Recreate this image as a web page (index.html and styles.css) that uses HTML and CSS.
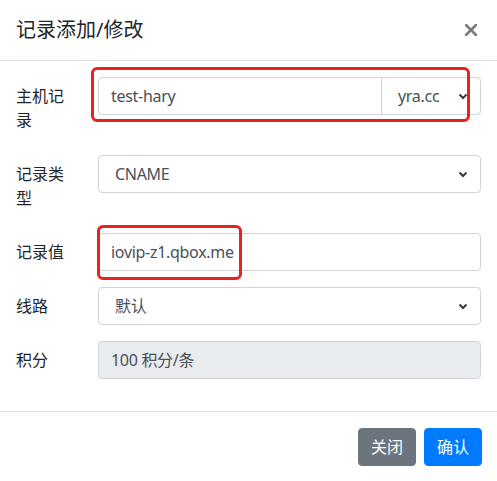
FILE: index.html
```html
<!DOCTYPE html>
<html lang="zh-CN">
<head>
    <meta charset="UTF-8">
    <meta name="viewport" content="width=device-width, initial-scale=1.0">
    <title>记录添加/修改</title>
    <link rel="stylesheet" href="styles.css">
</head>
<body>
    <div class="modal">
        <div class="modal-header">
            <h5 class="modal-title">记录添加/修改</h5>
            <button class="close" type="button" aria-label="Close">
                <svg width="12" height="12" viewBox="0 0 12 12">
                    <path d="M1 1L11 11M11 1L1 11" stroke="currentColor" stroke-width="2.6" stroke-linecap="round"/>
                </svg>
            </button>
        </div>

        <div class="modal-body">
            <div class="form-group">
                <label class="form-label">主机记录</label>
                <div class="form-control-wrap input-group">
                    <div class="form-control">test-hary</div>
                    <div class="form-select domain">
                        <span>yra.cc</span>
                        <svg class="chevron" width="10" height="7" viewBox="0 0 10 7">
                            <path d="M1.5 1.5L5 5L8.5 1.5" fill="none" stroke="#343a40" stroke-width="2"/>
                        </svg>
                    </div>
                </div>
            </div>

            <div class="form-group">
                <label class="form-label">记录类型</label>
                <div class="form-control-wrap">
                    <div class="form-select">
                        <span>CNAME</span>
                        <svg class="chevron" width="10" height="7" viewBox="0 0 10 7">
                            <path d="M1.5 1.5L5 5L8.5 1.5" fill="none" stroke="#343a40" stroke-width="2"/>
                        </svg>
                    </div>
                </div>
            </div>

            <div class="form-group">
                <label class="form-label">记录值</label>
                <div class="form-control-wrap">
                    <div class="form-control">iovip-z1.qbox.me</div>
                </div>
            </div>

            <div class="form-group">
                <label class="form-label">线路</label>
                <div class="form-control-wrap">
                    <div class="form-select">
                        <span>默认</span>
                        <svg class="chevron" width="10" height="7" viewBox="0 0 10 7">
                            <path d="M1.5 1.5L5 5L8.5 1.5" fill="none" stroke="#343a40" stroke-width="2"/>
                        </svg>
                    </div>
                </div>
            </div>

            <div class="form-group">
                <label class="form-label">积分</label>
                <div class="form-control-wrap">
                    <div class="form-control readonly">100 积分/条</div>
                </div>
            </div>
        </div>

        <div class="modal-footer">
            <button class="btn btn-secondary" type="button">关闭</button>
            <button class="btn btn-primary" type="button">确认</button>
        </div>

        <!-- annotation boxes drawn over the screenshot -->
        <div class="mark mark-host"></div>
        <div class="mark mark-value"></div>
    </div>
</body>
</html>
```

FILE: styles.css
```css
* {
    margin: 0;
    padding: 0;
    box-sizing: border-box;
}

body {
    font-family: "Noto Sans", "Noto Sans CJK SC", sans-serif;
    font-size: 16px;
    line-height: 1.5;
    color: #212529;
    background: #fff;
}

.modal {
    position: relative;
    width: 497px;
    background: #fff;
}

.modal-header {
    display: flex;
    align-items: center;
    justify-content: space-between;
    height: 61px;
    padding: 0 16px 1px 16px;
    border-bottom: 1px solid #dee2e6;
}

.modal-title {
    font-size: 20px;
    font-weight: 400;
    line-height: 30px;
    color: #212529;
}

.close {
    display: flex;
    align-items: center;
    justify-content: center;
    width: 16px;
    height: 16px;
    margin-right: 2px;
    border: none;
    background: none;
    color: #7b7b7b;
    cursor: pointer;
}

.modal-body {
    padding: 16px;
}

.form-group {
    display: flex;
    align-items: flex-start;
    margin-bottom: 16px;
}

.form-label {
    flex: 0 0 82px;
    padding: 7px 30px 7px 0;
    line-height: 24px;
}

.form-control-wrap {
    flex: 1;
    min-width: 0;
}

.form-control,
.form-select {
    height: 38px;
    border: 1px solid #ced4da;
    border-radius: 4px;
    color: #495057;
    line-height: 24px;
    letter-spacing: -0.3px;
    white-space: nowrap;
}

.form-control {
    padding: 6px 12px;
}

.form-control.readonly {
    background: #e9ecef;
}

.form-select {
    display: flex;
    align-items: center;
    justify-content: space-between;
    padding: 6px 12px 6px 16px;
}

.chevron {
    flex-shrink: 0;
}

.input-group {
    display: flex;
}

.input-group .form-control {
    flex: 1;
    border-top-right-radius: 0;
    border-bottom-right-radius: 0;
}

.input-group .domain {
    width: 100px;
    margin-left: -1px;
    border-top-left-radius: 0;
    border-bottom-left-radius: 0;
}

.modal-footer {
    display: flex;
    justify-content: flex-end;
    gap: 8px;
    padding: 16px 15px 16px 16px;
    border-top: 1px solid #dee2e6;
}

.btn {
    height: 38px;
    padding: 0 12px;
    border: 1px solid transparent;
    border-radius: 4px;
    font-family: inherit;
    font-size: 16px;
    line-height: 24px;
    color: #fff;
    cursor: pointer;
}

.btn-secondary {
    background: #6c757d;
    border-color: #6c757d;
}

.btn-primary {
    background: #007bff;
    border-color: #007bff;
}

.mark {
    position: absolute;
    border: 3px solid #e8231f;
    border-radius: 6px;
    pointer-events: none;
}

.mark-host {
    left: 91px;
    top: 67px;
    width: 379px;
    height: 55px;
}

.mark-value {
    left: 97px;
    top: 225px;
    width: 145px;
    height: 55px;
}
```
